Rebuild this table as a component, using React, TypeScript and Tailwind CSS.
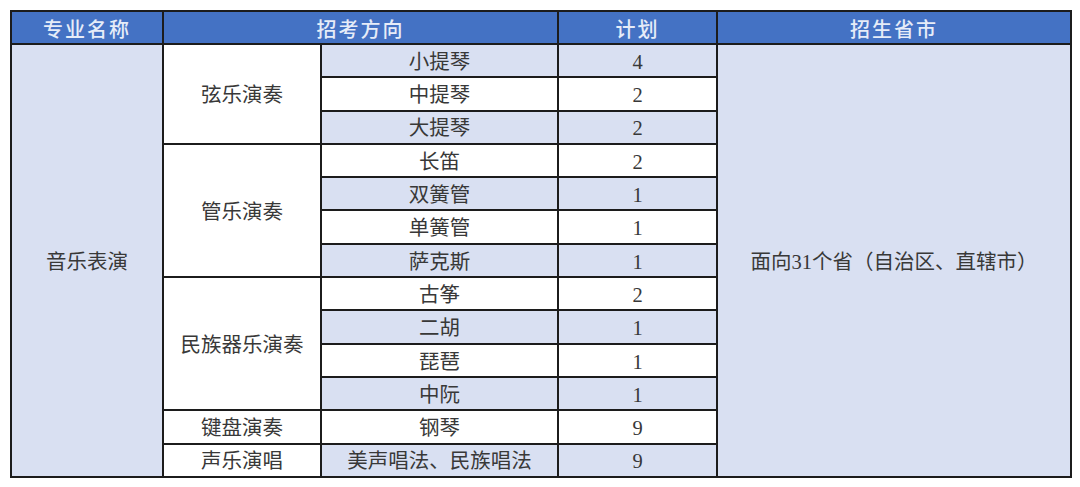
const BLUE = 'bg-[#d9e0f2]';

type Row = { group?: { name: string; span: number }; item: string; plan: string };

const ROWS: Row[] = [
  { group: { name: '弦乐演奏', span: 3 }, item: '小提琴', plan: '4' },
  { item: '中提琴', plan: '2' },
  { item: '大提琴', plan: '2' },
  { group: { name: '管乐演奏', span: 4 }, item: '长笛', plan: '2' },
  { item: '双簧管', plan: '1' },
  { item: '单簧管', plan: '1' },
  { item: '萨克斯', plan: '1' },
  { group: { name: '民族器乐演奏', span: 4 }, item: '古筝', plan: '2' },
  { item: '二胡', plan: '1' },
  { item: '琵琶', plan: '1' },
  { item: '中阮', plan: '1' },
  { group: { name: '键盘演奏', span: 1 }, item: '钢琴', plan: '9' },
  { group: { name: '声乐演唱', span: 1 }, item: '美声唱法、民族唱法', plan: '9' },
];

const cell = 'border-2 border-[#1c1c1c] text-center align-middle px-0 pb-0 pt-[3px]';

export default function App() {
  return (
    <div className="w-[1080px] h-[487px] bg-white pt-[10px] pl-[10px]">
      <table
        className="table-fixed border-collapse w-[1060px] text-[20.5px] text-[#383838] leading-none"
        style={{ fontFamily: '"Liberation Serif", "Noto Sans CJK SC", serif' }}
      >
        <colgroup>
          <col className="w-[152px]" />
          <col className="w-[158px]" />
          <col className="w-[237px]" />
          <col className="w-[159px]" />
          <col className="w-[354px]" />
        </colgroup>
        <thead>
          <tr className="h-[33px] bg-[#4472c4] text-[#e6ecf8] text-[20px] font-medium tracking-[2px]"
            style={{ fontFamily: '"Noto Sans CJK SC", sans-serif' }}>
            <th className={`${cell} font-medium`}>专业名称</th>
            <th className={`${cell} font-medium`} colSpan={2}>招考方向</th>
            <th className={`${cell} font-medium`}>计划</th>
            <th className={`${cell} font-medium`}>招生省市</th>
          </tr>
        </thead>
        <tbody>
          {ROWS.map((r, i) => {
            const shade = i % 2 === 0 ? BLUE : 'bg-white';
            return (
              <tr key={r.item} className="h-[33.3px]">
                {i === 0 && (
                  <td className={`${cell} ${BLUE}`} rowSpan={ROWS.length}>音乐表演</td>
                )}
                {r.group && (
                  <td className={`${cell} bg-white`} rowSpan={r.group.span}>{r.group.name}</td>
                )}
                <td className={`${cell} ${shade}`}>{r.item}</td>
                <td className={`${cell} ${shade}`}>{r.plan}</td>
                {i === 0 && (
                  <td className={`${cell} ${BLUE}`} rowSpan={ROWS.length}>面向31个省（自治区、直辖市）</td>
                )}
              </tr>
            );
          })}
        </tbody>
      </table>
    </div>
  );
}
